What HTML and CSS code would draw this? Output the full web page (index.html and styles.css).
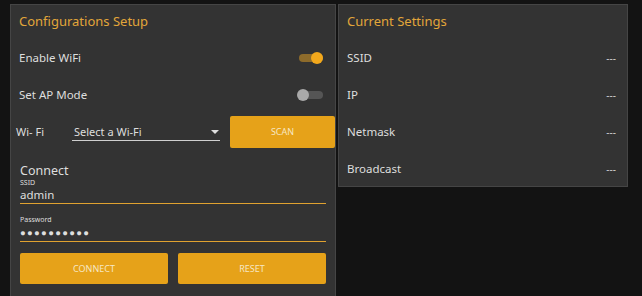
FILE: index.html
```html
<!DOCTYPE html>
<html lang="en">
<head>
  <meta charset="UTF-8">
  <meta name="viewport" content="width=device-width, initial-scale=1">
  <title>WiFi Configuration</title>
  <link rel="stylesheet" href="styles.css">
</head>
<body>

  <div class="page">
    <!-- Configuration panel -->
    <div class="panel config">
      <div class="panel-title">Configurations Setup</div>

      <div class="row">
        <span>Enable WiFi</span>
        <div class="switch on"><div class="knob"></div></div>
      </div>
      <div class="row">
        <span>Set AP Mode</span>
        <div class="switch"><div class="knob"></div></div>
      </div>

      <div class="wifi-row">
        <span class="wifi-label">Wi- Fi</span>
        <div class="select">
          <span>Select a Wi-Fi</span>
          <span class="caret"></span>
        </div>
        <button class="btn scan">SCAN</button>
      </div>

      <div class="connect">
        <div class="connect-title">Connect</div>
        <div class="field">
          <label>SSID</label>
          <div class="value">admin</div>
        </div>
        <div class="field">
          <label>Password</label>
          <div class="value dots">●●●●●●●●●●</div>
        </div>
        <div class="actions">
          <button class="btn">CONNECT</button>
          <button class="btn">RESET</button>
        </div>
      </div>
    </div>

    <!-- Current settings panel -->
    <div class="panel current">
      <div class="panel-title">Current Settings</div>
      <div class="row"><span>SSID</span><span class="val">---</span></div>
      <div class="row"><span>IP</span><span class="val">---</span></div>
      <div class="row"><span>Netmask</span><span class="val">---</span></div>
      <div class="row"><span>Broadcast</span><span class="val">---</span></div>
    </div>
  </div>

</body>
</html>
```

FILE: styles.css
```css
body {
  font-family: "Noto Sans", Arial, sans-serif;
  background-color: #131313;
  margin: 0;
  height: 296px;
  overflow: hidden;
  color: #dedede;
}
.page {
  display: flex;
  align-items: flex-start;
  gap: 2px;
  padding: 4px 0 0 10px;
}
.panel {
  background-color: #333333;
  border: 1px solid #454545;
  box-sizing: border-box;
}
.config {
  width: 326px;
  height: 293px;
}
.current {
  width: 290px;
  height: 183px;
}
.panel-title {
  height: 34px;
  line-height: 32px;
  padding-left: 8px;
  font-size: 13px;
  color: #e2a63a;
}
.row {
  display: flex;
  justify-content: space-between;
  align-items: center;
  height: 37px;
  padding: 0 11px 0 8px;
  font-size: 11.5px;
}
.val {
  color: #cfcfcf;
  font-size: 10px;
}
.switch {
  position: relative;
  width: 24px;
  height: 8px;
  border-radius: 4px;
  background-color: #555;
  margin-right: 1px;
}
.switch.on {
  background-color: #8d6b2b;
}
.knob {
  position: absolute;
  top: -2px;
  left: -2px;
  width: 12px;
  height: 12px;
  border-radius: 50%;
  background-color: #a9a9a9;
}
.switch.on .knob {
  left: auto;
  right: 0;
  background-color: #f2a81c;
}
.wifi-row {
  display: flex;
  align-items: center;
  height: 37px;
  padding-left: 5px;
  font-size: 11px;
}
.wifi-label {
  width: 56px;
}
.select {
  display: flex;
  justify-content: space-between;
  align-items: center;
  width: 148px;
  height: 18px;
  margin-top: 1px;
  padding-left: 2px;
  box-sizing: border-box;
  border-bottom: 1px solid #cfcfcf;
  font-size: 11px;
}
.caret {
  width: 0;
  height: 0;
  border-left: 4px solid transparent;
  border-right: 4px solid transparent;
  border-top: 4px solid #dedede;
  margin-right: 1px;
}
.btn {
  background-color: #e6a219;
  color: #f6e7c4;
  border: none;
  border-radius: 2px;
  font-family: "Noto Sans", Arial, sans-serif;
  font-size: 9px;
  cursor: pointer;
}
.scan {
  width: 105px;
  height: 32px;
  margin-left: 10px;
}
.connect {
  padding: 13px 9px 0 9px;
}
.connect-title {
  font-size: 12.5px;
  line-height: 15px;
}
.field {
  border-bottom: 1px solid #e0a230;
  margin-bottom: 11px;
}
.field label {
  display: block;
  font-size: 7px;
  line-height: 9px;
}
.value {
  font-size: 11.5px;
  line-height: 15px;
  padding-bottom: 1px;
}
.dots {
  font-size: 9.5px;
  letter-spacing: 1.3px;
  line-height: 14px;
  padding-top: 2px;
  padding-bottom: 1px;
}
.field + .field label {
  margin-top: 6px;
}
.actions {
  display: flex;
  justify-content: space-between;
}
.actions .btn {
  width: 148px;
  height: 31px;
}
```
